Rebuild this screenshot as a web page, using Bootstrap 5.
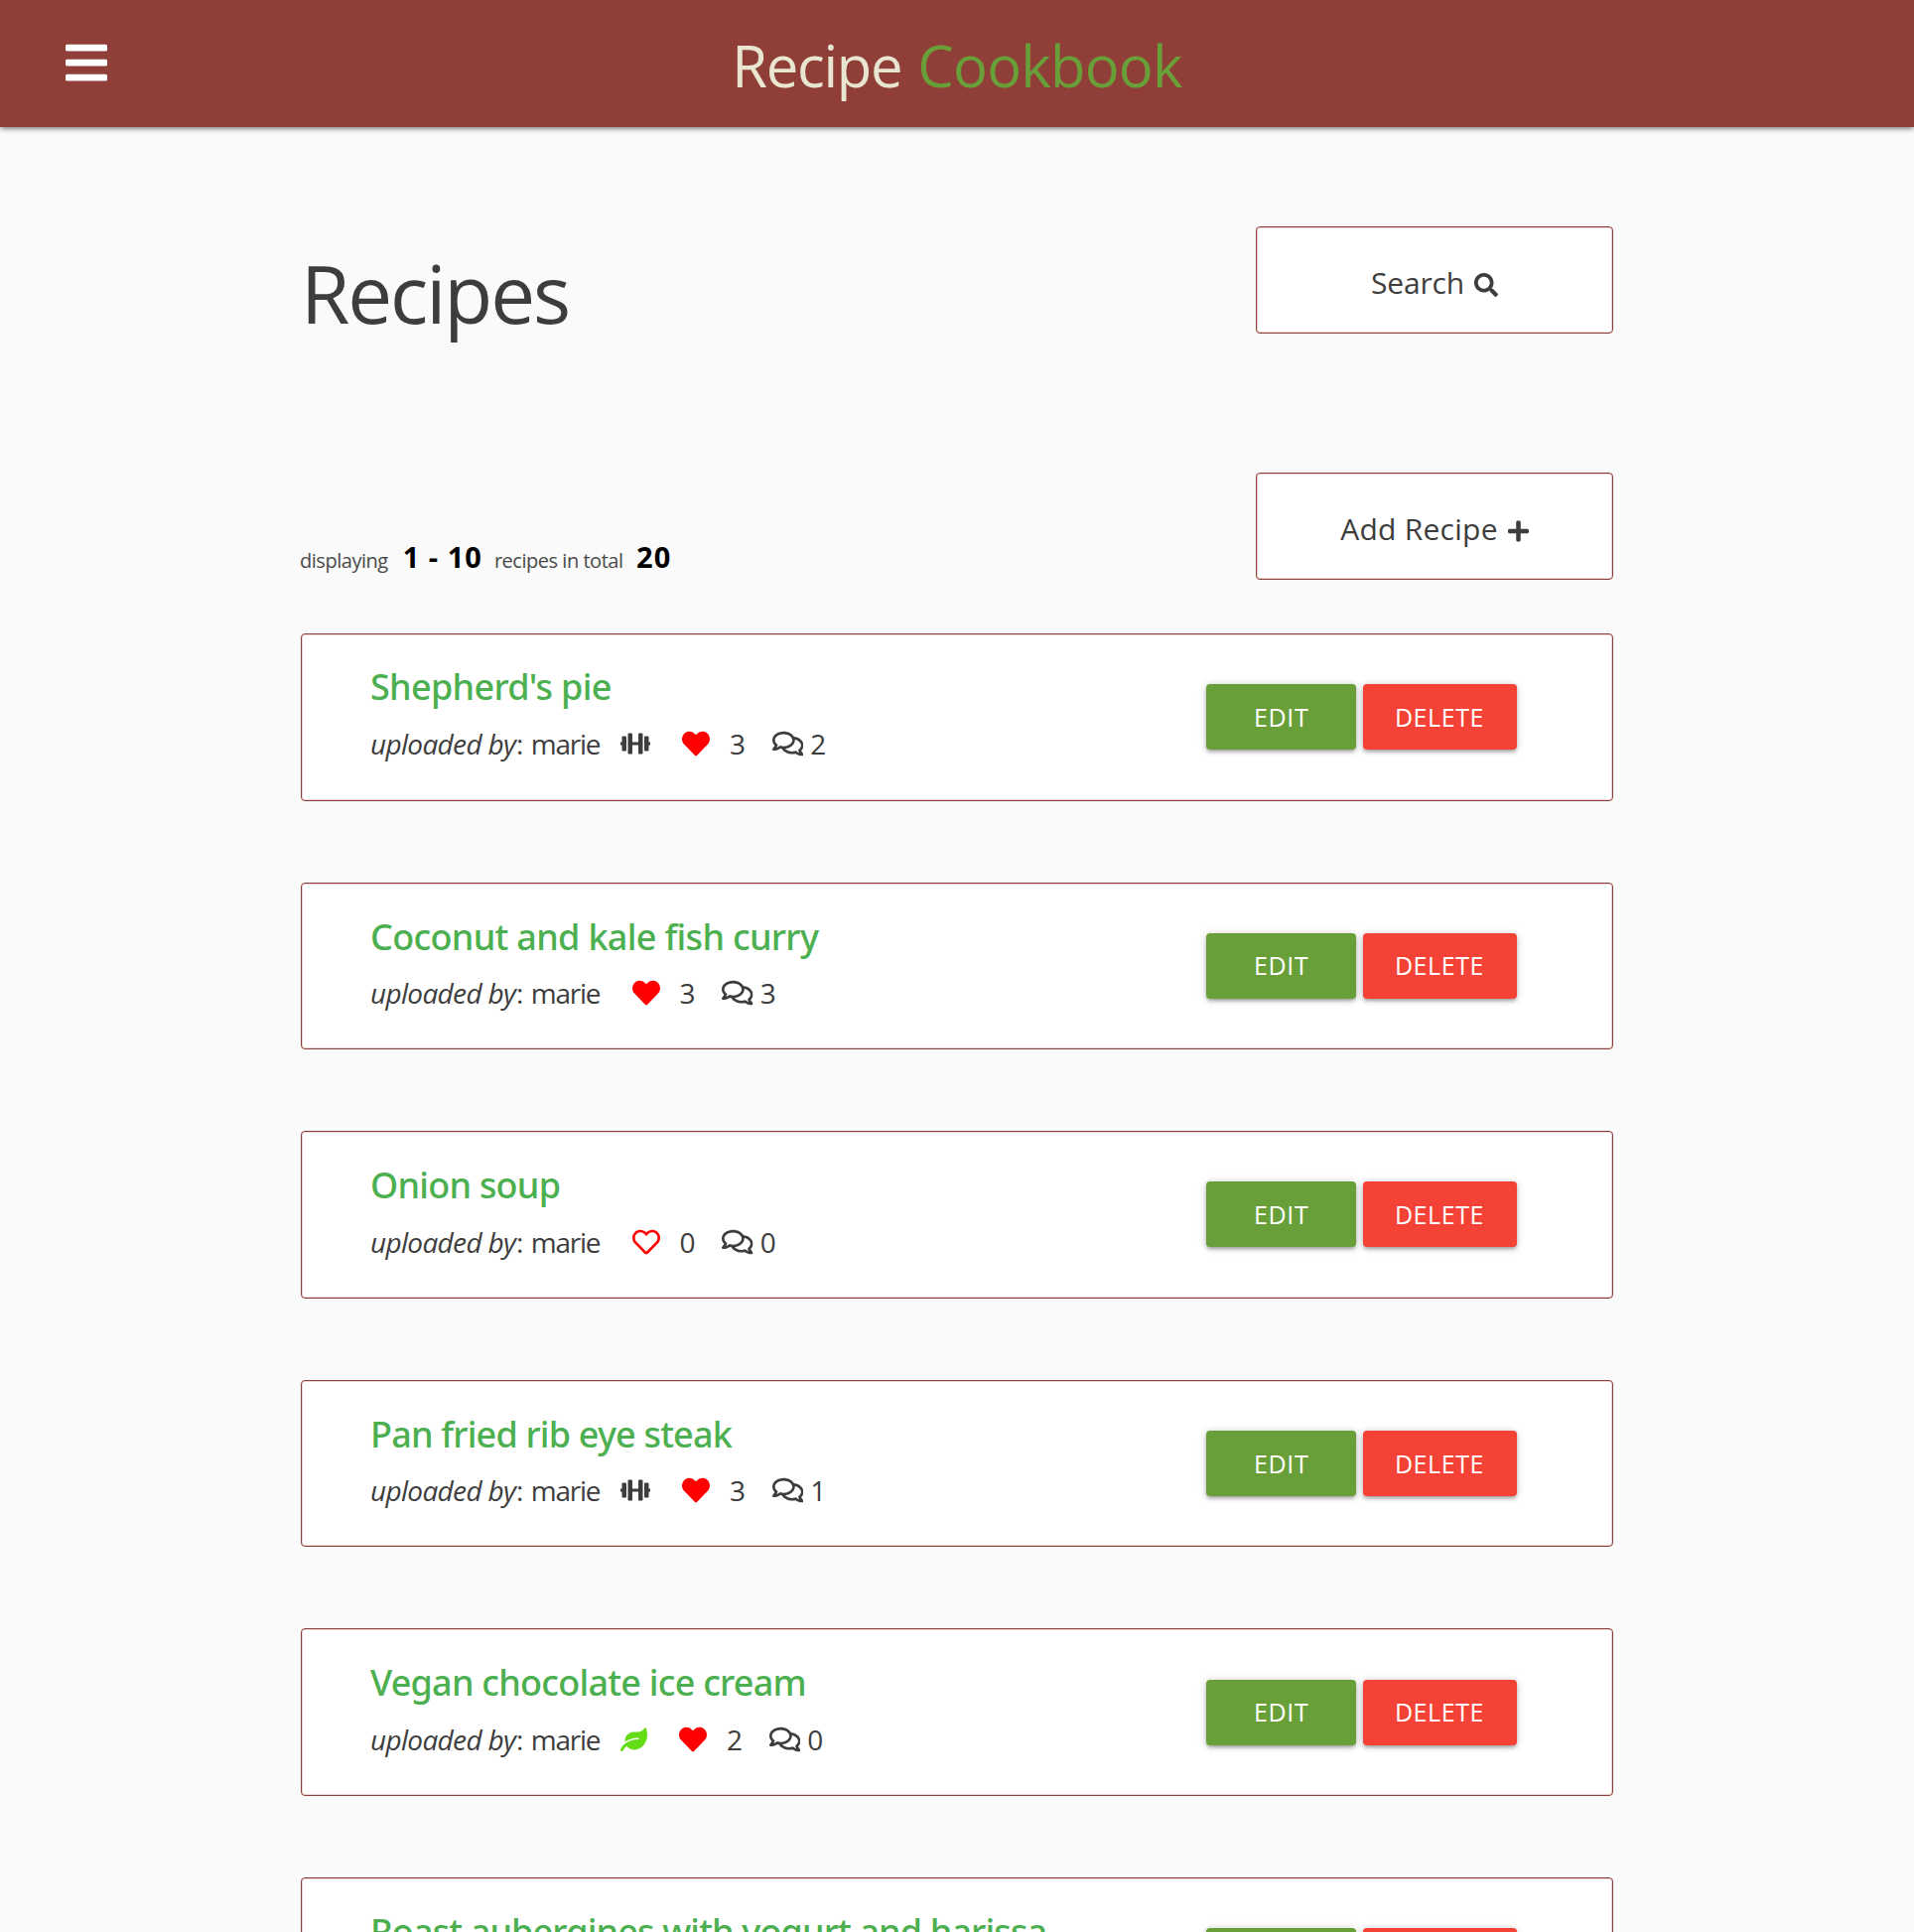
<!DOCTYPE html>
<html lang="en">
<head>
<meta charset="utf-8">
<meta name="viewport" content="width=device-width, initial-scale=1">
<title>Recipe Cookbook</title>
<link href="https://cdn.jsdelivr.net/npm/bootstrap@5.3.0/dist/css/bootstrap.min.css" rel="stylesheet">
<style>
:root{--brick:#903f38;--leaf:#689f38;--ink:#3d3d3d}
html{overflow:hidden}
body{height:1946px;overflow:hidden;background:#fafafa;color:var(--ink);font-family:"Open Sans","Noto Sans",sans-serif}
svg{fill:currentColor;flex:none;display:block}
.topbar{height:128px;background:var(--brick);box-shadow:0 3px 3px rgba(0,0,0,.14),0 4px 2px -3px rgba(0,0,0,.12),0 1px 7px rgba(0,0,0,.3);position:relative}
.menu-btn{left:66px;top:39px;color:#fff;line-height:0}
.site-title{font-size:58px;line-height:1;padding:37px 0 0;color:#e8e6d0;column-gap:16px}
.site-title span:first-child{letter-spacing:-1.31px}
.site-title span:last-child{letter-spacing:-.76px;color:var(--leaf)}
.wrap{width:1322px;margin-left:303px;padding-top:100px}
.page-h{font-size:80px;line-height:1;letter-spacing:-2.11px;font-weight:400;padding-top:27px}
.tile{width:360px;height:108px;background:#fff;border:1px solid var(--brick);border-radius:4px;box-shadow:inset 0 0 0 1px rgba(144,63,56,.22);font-size:30px;line-height:1;color:var(--ink);gap:10px;padding-top:5px;letter-spacing:.26px}
.tile svg{margin-top:5px}
.tile.find{letter-spacing:-.16px}
.row-gap{margin-top:140px}
.tally{font-size:20px;line-height:28px;letter-spacing:-.47px;margin:0 0 5px -1px;color:#4a4a4a}
.tally b{font-size:29px;line-height:28px;letter-spacing:1px;color:#000}
.recipes{margin-top:54px;gap:82px}
.dish{height:168.6px;background:#fff;border:1px solid var(--brick);border-radius:4px;box-shadow:inset 0 0 0 1px rgba(144,63,56,.22);padding:0 96.5px 0 69px}
.dish h2{font:500 36px/44px "Noto Sans","Open Sans",sans-serif;letter-spacing:-.76px;color:#4caf50;margin:32px 0 15.5px;white-space:nowrap}
.dish:first-child h2{margin-top:31px;margin-bottom:16px;letter-spacing:-.7px}
.dish:nth-child(2) h2{letter-spacing:-.69px}
.dish:nth-child(4) h2{letter-spacing:-.82px}
.dish:nth-child(6) h2{letter-spacing:-.88px}
.meta{font-size:28px;line-height:38px}
.meta em{letter-spacing:-.67px;word-spacing:0;margin-right:.8px}
.by{letter-spacing:-1.25px;word-spacing:2.7px;width:231.5px;white-space:pre}
.diet{margin-left:20.5px}
.like{color:red;margin-left:32.3px}
.likes{margin-left:19.7px;width:15.5px}
.talk{margin:0 7px 0 27.2px}
.acts{column-gap:6.5px}
.pill{height:66px;border:0;border-radius:4px;color:#fff!important;font-size:25px;line-height:1;padding:0;box-shadow:0 3px 3px rgba(0,0,0,.14),0 4px 2px -3px rgba(0,0,0,.12),0 1px 7px rgba(0,0,0,.25);letter-spacing:.6px}
.edit{width:150.7px;background:var(--leaf)!important}
.del{width:155px;background:#f44336!important}
</style>
<script src="https://cdn.jsdelivr.net/npm/bootstrap@5.3.0/dist/js/bootstrap.bundle.min.js"></script>
</head>
<body>
<svg width="0" height="0" class="position-absolute">
<symbol id="dumbbell" viewBox="0 0 640 512"><path d="M104 96H56c-13.3 0-24 10.7-24 24v104H8c-4.4 0-8 3.6-8 8v48c0 4.4 3.6 8 8 8h24v104c0 13.3 10.7 24 24 24h48c13.3 0 24-10.7 24-24V120c0-13.3-10.7-24-24-24zm528 128h-24V120c0-13.3-10.7-24-24-24h-48c-13.3 0-24 10.7-24 24v272c0 13.3 10.7 24 24 24h48c13.3 0 24-10.7 24-24V288h24c4.4 0 8-3.6 8-8v-48c0-4.4-3.6-8-8-8zM456 32h-48c-13.3 0-24 10.7-24 24v168H256V56c0-13.3-10.7-24-24-24h-48c-13.3 0-24 10.7-24 24v400c0 13.3 10.7 24 24 24h48c13.3 0 24-10.7 24-24V288h128v168c0 13.3 10.7 24 24 24h48c13.3 0 24-10.7 24-24V56c0-13.3-10.7-24-24-24z"/></symbol>
<symbol id="leaf" viewBox="0 0 576 512"><path d="M546.2 9.7c-5.6-12.5-21.6-13-28.3-1.2C486.9 62.4 431.4 96 368 96h-80C182 96 96 182 96 288c0 7 .8 13.7 1.5 20.5C161.3 262.8 253.4 224 384 224c8.8 0 16 7.2 16 16s-7.2 16-16 16C132.6 256 26 410.1 2.4 468c-6.6 16.3 1.2 34.9 17.5 41.6 16.4 6.8 35-1.1 41.8-17.3 1.5-3.6 20.9-47.9 71.9-90.6 32.4 43.9 94 85.8 174.9 77.2C465.5 467.5 576 326.7 576 154.3c0-50.2-10.8-102.2-29.8-144.6z"/></symbol>
<symbol id="heart" viewBox="0 0 512 512"><path d="M462.3 62.6C407.5 15.9 326 24.3 275.7 76.2L256 96.5l-19.7-20.3C186.1 24.3 104.5 15.9 49.7 62.6c-62.8 53.6-66.1 149.8-9.9 207.9l193.5 199.8c12.5 12.9 32.8 12.9 45.3 0l193.5-199.8c56.3-58.1 53-154.3-9.8-207.9z"/></symbol>
<symbol id="heart-o" viewBox="0 0 512 512"><path d="M458.4 64.3C400.6 15.7 311.3 23 256 79.3 200.7 23 111.4 15.6 53.6 64.3-21.6 127.6-10.6 230.8 43 285.5l175.4 178.7c10 10.2 23.4 15.9 37.6 15.9 14.3 0 27.6-5.6 37.6-15.8L469 285.6c53.5-54.7 64.7-157.9-10.6-221.3zm-23.6 187.5L259.4 430.5c-2.4 2.4-4.4 2.4-6.8 0L77.2 251.8c-36.5-37.2-43.9-107.6 7.3-150.7 38.9-32.7 98.9-27.8 136.5 10.5l35 35.7 35-35.7c37.8-38.5 97.8-43.2 136.5-10.6 51.1 43.1 43.5 113.9 7.3 150.8z"/></symbol>
<symbol id="comments" viewBox="0 0 576 512"><path d="M532 386.2c27.5-27.1 44-61.1 44-98.2 0-80-76.5-146.1-176.2-157.9C368.3 72.5 294.3 32 208 32 93.1 32 0 103.6 0 192c0 37 16.5 71 44 98.2-15.3 30.7-37.3 54.5-37.7 54.9-6.3 6.7-8.1 16.5-4.4 25 3.6 8.5 12 14 21.2 14 53.5 0 96.7-20.2 125.2-38.8 9.2 2.1 18.7 3.7 28.4 4.9C208.1 407.6 281.8 448 368 448c20.8 0 40.8-2.4 59.8-6.8C456.3 459.7 499.4 480 553 480c9.2 0 17.5-5.5 21.2-14 3.6-8.5 1.9-18.3-4.4-25-.4-.3-22.5-24.1-37.8-54.8zm-392.8-92.3L122.1 305c-14.1 9.1-28.5 16.3-43.1 21.4 2.7-4.7 5.4-9.7 8-14.8l15.5-31.1L77.7 256C64.2 242.6 48 220.7 48 192c0-60.7 73.3-112 160-112s160 51.3 160 112-73.3 112-160 112c-16.5 0-33-1.9-49-5.6l-19.8-4.5zM498.3 352l-24.7 24.4 15.5 31.1c2.6 5.1 5.3 10.1 8 14.8-14.6-5.1-29-12.3-43.1-21.4l-17.1-11.1-19.9 4.6c-16 3.7-32.5 5.6-49 5.6-54 0-102.2-20.1-131.3-49.7C338 339.5 416 272.9 416 192c0-3.4-.4-6.7-.7-10C479.7 196.5 528 238.8 528 288c0 28.7-16.2 50.6-29.7 64z"/></symbol>
</svg>

<nav class="topbar">
  <a class="menu-btn position-absolute" href="#" aria-label="Menu"><svg width="42" height="48" viewBox="0 0 448 512"><rect y="60" width="448" height="74" rx="16"/><rect y="220" width="448" height="74" rx="16"/><rect y="380" width="448" height="74" rx="16"/></svg></a>
  <div class="site-title d-flex justify-content-center"><span>Recipe</span><span>Cookbook</span></div>
</nav>

<main class="wrap">
  <div class="d-flex justify-content-between align-items-start">
    <h1 class="page-h m-0">Recipes</h1>
    <a href="#" class="tile find d-flex justify-content-center align-items-center text-decoration-none">Search <svg width="24" height="24" viewBox="0 0 512 512"><path d="M505 442.7L405.3 343c-4.5-4.5-10.6-7-17-7H372c27.6-35.3 44-79.7 44-128C416 93.1 322.9 0 208 0S0 93.1 0 208s93.1 208 208 208c48.3 0 92.7-16.4 128-44v16.3c0 6.4 2.5 12.5 7 17l99.7 99.7c9.4 9.4 24.6 9.4 33.9 0l28.3-28.3c9.4-9.4 9.4-24.6.1-34zM208 336c-70.7 0-128-57.2-128-128 0-70.7 57.2-128 128-128 70.7 0 128 57.2 128 128 0 70.7-57.2 128-128 128z"/></svg></a>
  </div>
  <div class="row-gap d-flex justify-content-between align-items-end">
    <div class="tally d-flex align-items-baseline"><span>displaying</span><b style="margin-left:15px">1 - 10</b><span style="margin-left:12px">recipes in total</span><b style="margin-left:13.5px">20</b></div>
    <a href="#" class="tile d-flex justify-content-center align-items-center text-decoration-none">Add Recipe <svg width="21" height="24" viewBox="0 0 448 512"><path d="M416 208H272V64c0-17.67-14.33-32-32-32h-32c-17.67 0-32 14.33-32 32v144H32c-17.67 0-32 14.33-32 32v32c0 17.67 14.33 32 32 32h144v144c0 17.67 14.33 32 32 32h32c17.67 0 32-14.33 32-32V304h144c17.67 0 32-14.33 32-32v-32c0-17.67-14.33-32-32-32z"/></svg></a>
  </div>

  <section class="recipes d-flex flex-column">
    <article class="dish d-flex justify-content-between">
      <div><h2>Shepherd's pie</h2>
        <div class="meta d-flex align-items-center"><span class="by"><em>uploaded by</em>: marie</span><svg class="diet" width="30" height="24"><use href="#dumbbell"/></svg><svg class="like" width="28" height="28"><use href="#heart"/></svg><span class="likes">3</span><svg class="talk" width="31.5" height="28"><use href="#comments"/></svg><span>2</span></div></div>
      <div class="acts d-flex align-items-center"><a class="btn pill edit d-flex justify-content-center align-items-center" href="#">EDIT</a><a class="btn pill del d-flex justify-content-center align-items-center" href="#">DELETE</a></div>
    </article>
    <article class="dish d-flex justify-content-between">
      <div><h2>Coconut and kale fish curry</h2>
        <div class="meta d-flex align-items-center"><span class="by"><em>uploaded by</em>: marie</span><svg class="like" width="28" height="28"><use href="#heart"/></svg><span class="likes">3</span><svg class="talk" width="31.5" height="28"><use href="#comments"/></svg><span>3</span></div></div>
      <div class="acts d-flex align-items-center"><a class="btn pill edit d-flex justify-content-center align-items-center" href="#">EDIT</a><a class="btn pill del d-flex justify-content-center align-items-center" href="#">DELETE</a></div>
    </article>
    <article class="dish d-flex justify-content-between">
      <div><h2>Onion soup</h2>
        <div class="meta d-flex align-items-center"><span class="by"><em>uploaded by</em>: marie</span><svg class="like" width="28" height="28"><use href="#heart-o"/></svg><span class="likes">0</span><svg class="talk" width="31.5" height="28"><use href="#comments"/></svg><span>0</span></div></div>
      <div class="acts d-flex align-items-center"><a class="btn pill edit d-flex justify-content-center align-items-center" href="#">EDIT</a><a class="btn pill del d-flex justify-content-center align-items-center" href="#">DELETE</a></div>
    </article>
    <article class="dish d-flex justify-content-between">
      <div><h2>Pan fried rib eye steak</h2>
        <div class="meta d-flex align-items-center"><span class="by"><em>uploaded by</em>: marie</span><svg class="diet" width="30" height="24"><use href="#dumbbell"/></svg><svg class="like" width="28" height="28"><use href="#heart"/></svg><span class="likes">3</span><svg class="talk" width="31.5" height="28"><use href="#comments"/></svg><span>1</span></div></div>
      <div class="acts d-flex align-items-center"><a class="btn pill edit d-flex justify-content-center align-items-center" href="#">EDIT</a><a class="btn pill del d-flex justify-content-center align-items-center" href="#">DELETE</a></div>
    </article>
    <article class="dish d-flex justify-content-between">
      <div><h2>Vegan chocolate ice cream</h2>
        <div class="meta d-flex align-items-center"><span class="by"><em>uploaded by</em>: marie</span><svg class="diet" style="color:#64dd17" width="27" height="24"><use href="#leaf"/></svg><svg class="like" width="28" height="28"><use href="#heart"/></svg><span class="likes">2</span><svg class="talk" width="31.5" height="28"><use href="#comments"/></svg><span>0</span></div></div>
      <div class="acts d-flex align-items-center"><a class="btn pill edit d-flex justify-content-center align-items-center" href="#">EDIT</a><a class="btn pill del d-flex justify-content-center align-items-center" href="#">DELETE</a></div>
    </article>
    <article class="dish d-flex justify-content-between">
      <div><h2>Roast aubergines with yogurt and harissa</h2></div>
      <div class="acts d-flex align-items-center"><a class="btn pill edit d-flex justify-content-center align-items-center" href="#">EDIT</a><a class="btn pill del d-flex justify-content-center align-items-center" href="#">DELETE</a></div>
    </article>
  </section>
</main>
</body>
</html>
